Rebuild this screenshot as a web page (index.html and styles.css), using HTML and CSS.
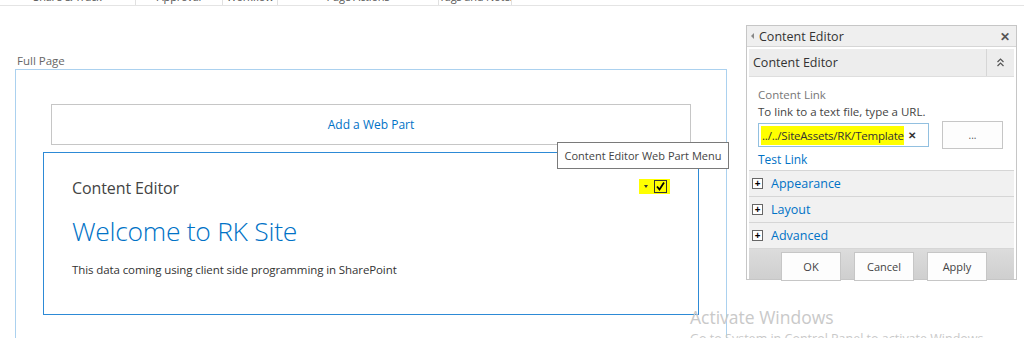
FILE: index.html
```html
<!DOCTYPE html>
<html>
  <head>
    <title>Content Editor</title>
    <meta charset="utf-8" />
    <link rel="stylesheet" href="styles.css">
  </head>
  <body>
    <div class="ribbon">
      <div class="tab tab-share"><span>Share &amp; Track</span></div>
      <div class="tab tab-approval"><span>Approval</span></div>
      <div class="tab tab-workflow"><span>Workflow</span></div>
      <div class="tab tab-actions"><span>Page Actions</span></div>
      <div class="tab tab-tags"><span>Tags and Notes</span></div>
    </div>

    <div class="page">
      <div class="main">
        <div class="zone-title">Full Page</div>
        <div class="zone">
          <div class="add-part">Add a Web Part</div>
          <div class="webpart">
            <div class="wp-head">
              <span class="wp-title">Content Editor</span>
              <span class="wp-menu">
                <span class="wp-arrow"></span>
                <span class="wp-check">
                  <svg width="11" height="11" viewBox="0 0 11 11">
                    <path d="M2 5.5 L4.5 8.5 L9 1.5" fill="none" stroke="#000" stroke-width="1.8" />
                  </svg>
                </span>
              </span>
            </div>
            <h1 class="wp-heading">Welcome to RK Site</h1>
            <p class="wp-text">This data coming using client side programming in SharePoint</p>
          </div>
        </div>
        <div class="tooltip">Content Editor Web Part Menu</div>
      </div>

      <div class="toolpane">
        <div class="pane-head">
          <span class="pane-back"></span>
          <span class="pane-title">Content Editor</span>
          <span class="pane-close">&#x2715;</span>
        </div>
        <div class="section-head">
          <span class="section-title">Content Editor</span>
          <span class="section-toggle">
            <svg width="9" height="9" viewBox="0 0 9 9">
              <path d="M1.5 4 L4.5 1 L7.5 4 M1.5 8 L4.5 5 L7.5 8" fill="none" stroke="#555" stroke-width="1.2" />
            </svg>
          </span>
        </div>
        <div class="pane-body">
          <div class="field-label">Content Link</div>
          <div class="field-hint">To link to a text file, type a URL.</div>
          <div class="field-row">
            <div class="url-input">
              <span class="url-text">../../SiteAssets/RK/Template</span>
              <span class="url-clear">&#x2715;</span>
            </div>
            <button class="browse">...</button>
          </div>
          <a class="test-link">Test Link</a>
        </div>
        <div class="group"><span class="plus">+</span><span class="group-name">Appearance</span></div>
        <div class="group"><span class="plus">+</span><span class="group-name">Layout</span></div>
        <div class="group"><span class="plus">+</span><span class="group-name">Advanced</span></div>
        <div class="pane-foot">
          <button class="btn">OK</button>
          <button class="btn">Cancel</button>
          <button class="btn">Apply</button>
        </div>
      </div>
    </div>

    <div class="watermark">
      <div class="wm-big">Activate Windows</div>
      <div class="wm-small">Go to System in Control Panel to activate Windows.</div>
    </div>
  </body>
</html>
```

FILE: styles.css
```css
body {
	font-family: "Open Sans", "Liberation Sans", sans-serif;
	margin: 0;
	padding: 0;
	color: #444;
	background: #fff;
	height: 338px;
	overflow: hidden;
	position: relative;
}

/* Ribbon */

.ribbon {
	display: flex;
	height: 5px;
	border-bottom: 1px solid #e4e4e4;
	overflow: hidden;
}

.tab {
	height: 5px;
	border-right: 1px solid #e1e1e1;
	text-align: center;
	font-size: 11px;
	letter-spacing: -0.2px;
	color: #555;
	line-height: 14px;
	white-space: nowrap;
	overflow: hidden;
}

.tab span {
	display: block;
	margin-top: -10px;
}

.tab-share { width: 135px; }
.tab-approval { width: 86px; }
.tab-workflow { width: 54px; }
.tab-actions { width: 160px; }
.tab-tags { width: 72px; }

/* Page */

.page {
	display: flex;
	align-items: flex-start;
}

.main {
	position: relative;
	width: 712px;
	padding-left: 15px;
}

.zone-title {
	margin: 47px 0 0 2px;
	font-size: 11.5px;
	line-height: 16px;
	color: #666;
}

.zone {
	margin-top: 0;
	height: 280px;
	border: 1px solid #abd1ef;
	border-bottom: none;
	padding-top: 34px;
	box-sizing: border-box;
}

.add-part {
	margin-left: 35px;
	width: 638px;
	height: 39px;
	border: 1px solid #c6c6c6;
	color: #0072c6;
	font-size: 12px;
	line-height: 39px;
	text-align: center;
}

.webpart {
	margin: 7px 0 0 27px;
	width: 656px;
	height: 163px;
	border: 1px solid #2d8ad6;
	padding: 24px 28px 0 28px;
	box-sizing: border-box;
}

.wp-head {
	display: flex;
	justify-content: space-between;
	align-items: center;
}

.wp-title {
	font-size: 16px;
	color: #444;
	letter-spacing: -0.1px;
}

.wp-menu {
	display: flex;
	align-items: center;
	gap: 6px;
	background: #ffff00;
	padding: 1px 3px 1px 5px;
	margin-right: 0;
	margin-top: -4px;
}

.wp-arrow {
	width: 0;
	height: 0;
	border-left: 2.5px solid transparent;
	border-right: 2.5px solid transparent;
	border-top: 3px solid #333;
}

.wp-check {
	display: flex;
	width: 11px;
	height: 11px;
	border: 1px solid #333;
}

.wp-heading {
	margin: 15px 0 0 0;
	font-size: 26.5px;
	font-weight: 300;
	color: #0072c6;
	line-height: 34px;
	letter-spacing: -0.3px;
}

.wp-text {
	margin: 14px 0 0 0;
	font-size: 11.5px;
	color: #333;
	letter-spacing: -0.1px;
}

.tooltip {
	position: absolute;
	left: 557px;
	top: 136px;
	width: 170px;
	height: 25px;
	border: 1px solid #7a7a7a;
	background: #fff;
	font-size: 11px;
	line-height: 25px;
	text-align: center;
	color: #444;
}

/* Tool pane */

.toolpane {
	margin: 19px 0 0 19px;
	width: 269px;
	border: 1px solid #c6c6c6;
	font-size: 12px;
}

.pane-head {
	display: flex;
	align-items: center;
	height: 20px;
	background: #efefef;
	padding: 0 6px 0 4px;
	border-bottom: 1px solid #d6d6d6;
}

.pane-back {
	width: 0;
	height: 0;
	border-top: 3.5px solid transparent;
	border-bottom: 3.5px solid transparent;
	border-right: 3.5px solid #888;
	margin-right: 5px;
}

.pane-title {
	flex: 1;
	font-size: 12.5px;
	color: #333;
}

.pane-close {
	font-size: 12px;
	font-weight: bold;
	color: #555;
}

.section-head {
	display: flex;
	margin: 2px 2px 0 2px;
	height: 27px;
	background: #ededed;
	border-bottom: 1px solid #dedede;
}

.section-title {
	flex: 1;
	padding-left: 4px;
	line-height: 27px;
	font-size: 12.5px;
	color: #333;
}

.section-toggle {
	width: 27px;
	border-left: 1px solid #d6d6d6;
	display: flex;
	align-items: center;
	justify-content: center;
}

.pane-body {
	padding: 9px 0 1px 9px;
	border-bottom: 1px solid #d6d6d6;
	margin: 0 2px;
}

.field-label {
	color: #777;
	font-size: 11.5px;
	line-height: 17px;
}

.field-hint {
	color: #444;
	font-size: 11.5px;
	line-height: 17px;
}

.field-row {
	display: flex;
	align-items: center;
	margin-top: 1px;
}

.url-input {
	display: flex;
	align-items: center;
	width: 171px;
	height: 24px;
	border: 1px solid #92c0e0;
	padding-left: 2px;
	box-sizing: border-box;
}

.url-text {
	background: #ffff00;
	font-size: 11.5px;
	letter-spacing: -0.2px;
	line-height: 19px;
	padding-left: 1px;
	color: #333;
}

.url-clear {
	margin-left: 4px;
	font-size: 10px;
	font-weight: bold;
	color: #333;
}

.browse {
	margin-left: 13px;
	width: 61px;
	height: 28px;
	border: 1px solid #c6c6c6;
	background: #fdfdfd;
	font: 10px "Open Sans", sans-serif;
	color: #555;
	padding: 0;
}

.test-link {
	display: block;
	margin-top: 2px;
	color: #0072c6;
	font-size: 12px;
	line-height: 18px;
}

.group {
	display: flex;
	align-items: center;
	height: 25px;
	margin: 0 2px;
	background: #f1f1f1;
	border-bottom: 1px solid #d6d6d6;
	padding-left: 3px;
}

.plus {
	width: 9px;
	height: 9px;
	border: 1px solid #666;
	background: #fff;
	font-size: 10px;
	line-height: 8px;
	text-align: center;
	font-weight: bold;
	color: #000;
	margin-right: 8px;
}

.group-name {
	color: #0072c6;
	font-size: 12.5px;
}

.pane-foot {
	display: flex;
	gap: 13px;
	padding: 3px 0 0 32px;
	height: 27px;
	background: linear-gradient(#dcdcdc, #cfcfcf);
	margin: 0 2px;
}

.btn {
	width: 60px;
	height: 29px;
	border: 1px solid #c6c6c6;
	background: #fdfdfd;
	font: 11px "Open Sans", sans-serif;
	color: #444;
	padding: 0;
}

/* Watermark */

.watermark {
	position: absolute;
	left: 690px;
	top: 304px;
	color: #c9c9c9;
}

.wm-big {
	font-size: 17.5px;
	line-height: 26px;
}

.wm-small {
	font-size: 12.5px;
	line-height: 18px;
}
```
